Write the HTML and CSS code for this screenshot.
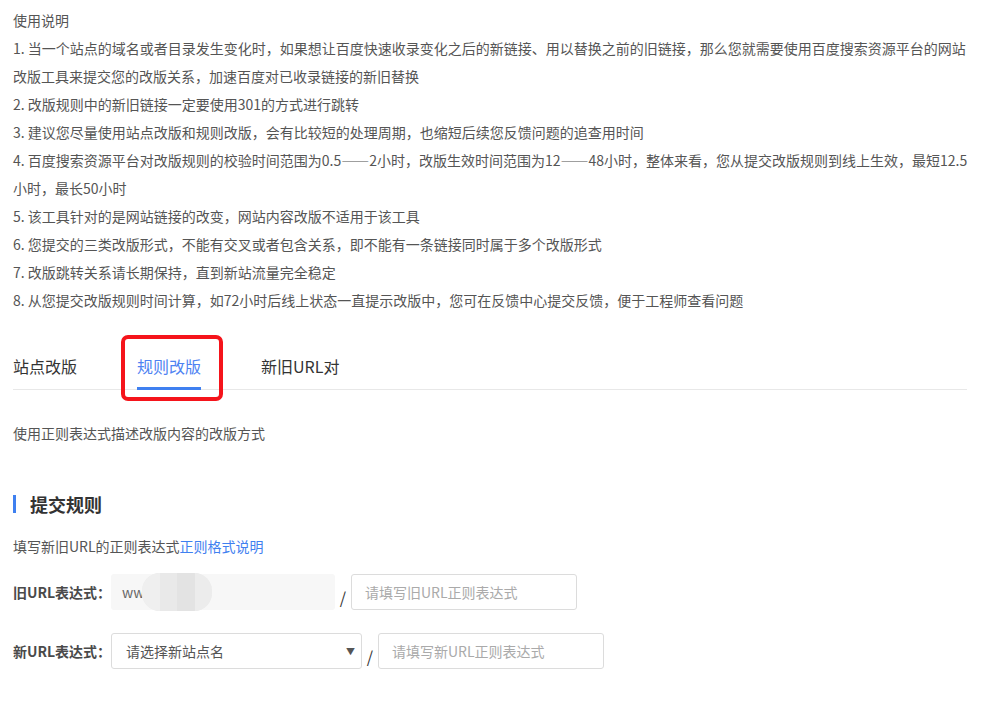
FILE: index.html
```html
<!DOCTYPE html>
<html lang="zh-CN">
<head>
<meta charset="utf-8">
<title>规则改版</title>
<link rel="stylesheet" href="styles.css">
</head>
<body>
<div class="page">
  <div class="notes">
    <p>使用说明</p>
    <p>1. 当一个站点的域名或者目录发生变化时，如果想让百度快速收录变化之后的新链接、用以替换之前的旧链接，那么您就需要使用百度搜索资源平台的网站改版工具来提交您的改版关系，加速百度对已收录链接的新旧替换</p>
    <p>2. 改版规则中的新旧链接一定要使用301的方式进行跳转</p>
    <p>3. 建议您尽量使用站点改版和规则改版，会有比较短的处理周期，也缩短后续您反馈问题的追查用时间</p>
    <p>4. 百度搜索资源平台对改版规则的校验时间范围为0.5——2小时，改版生效时间范围为12——48小时，整体来看，您从提交改版规则到线上生效，最短12.5小时，最长50小时</p>
    <p>5. 该工具针对的是网站链接的改变，网站内容改版不适用于该工具</p>
    <p>6. 您提交的三类改版形式，不能有交叉或者包含关系，即不能有一条链接同时属于多个改版形式</p>
    <p>7. 改版跳转关系请长期保持，直到新站流量完全稳定</p>
    <p>8. 从您提交改版规则时间计算，如72小时后线上状态一直提示改版中，您可在反馈中心提交反馈，便于工程师查看问题</p>
  </div>

  <div class="tabs">
    <div class="tab">站点改版</div>
    <div class="tab active">规则改版</div>
    <div class="tab">新旧URL对</div>
    <div class="mark"></div>
  </div>

  <p class="desc">使用正则表达式描述改版内容的改版方式</p>

  <h2 class="section-title">提交规则</h2>

  <p class="hint">填写新旧URL的正则表达式<a class="link" href="#">正则格式说明</a></p>

  <div class="form-row first">
    <label class="label">旧URL表达式：</label>
    <div class="field disabled">
      <span class="prefix">ww</span>
      <span class="blur"><i></i><i></i><i></i><i></i></span>
    </div>
    <span class="slash">/</span>
    <div class="field input"><span class="placeholder">请填写旧URL正则表达式</span></div>
  </div>

  <div class="form-row">
    <label class="label">新URL表达式：</label>
    <div class="field select">
      <span class="select-text">请选择新站点名</span>
      <span class="arrow">▼</span>
    </div>
    <span class="slash">/</span>
    <div class="field input"><span class="placeholder">请填写新URL正则表达式</span></div>
  </div>
</div>
</body>
</html>
```
FILE: styles.css
```css
* { box-sizing: border-box; }
html, body { margin: 0; padding: 0; background: #fff; }
body {
  font-family: "Noto Sans CJK SC", "Noto Sans", sans-serif;
  color: #555;
  font-size: 14px;
}
.page {
  width: 999px;
  padding: 6px 30px 0 13px;
}
p { margin: 0; }
.notes p {
  line-height: 28px;
  font-size: 14px;
}

.tabs {
  position: relative;
  display: flex;
  gap: 60px;
  margin-top: 17px;
  margin-right: 2px;
  border-bottom: 1px solid #e8e8e8;
}
.tab {
  font-size: 16px;
  line-height: 22px;
  padding: 24px 0 10px;
  color: #333;
  border-bottom: 3px solid transparent;
  margin-bottom: -1px;
}
.tab.active {
  color: #4e82f2;
  border-bottom-color: #3f80f0;
}
.mark {
  position: absolute;
  left: 108px;
  top: 4px;
  width: 102px;
  height: 66px;
  border: 4px solid #f5141b;
  border-radius: 7px;
}

.desc {
  margin-top: 29px;
  line-height: 28px;
  font-size: 14px;
}

.section-title {
  margin: 48px 0 0;
  border-left: 3px solid #3f80f0;
  padding-left: 14px;
  font-size: 18px;
  line-height: 18px;
  font-weight: 700;
  color: #333;
}

.hint {
  margin-top: 19px;
  line-height: 28px;
  font-size: 14px;
}
.link { color: #3f80f0; text-decoration: none; }

.form-row {
  display: flex;
  align-items: center;
  margin-top: 23px;
}
.form-row.first { margin-top: 14px; }
.label {
  width: 98px;
  font-size: 14px;
  font-weight: 700;
  color: #4a4a4a;
  white-space: nowrap;
}
.field {
  height: 36px;
  display: flex;
  align-items: center;
  font-size: 13px;
  border-radius: 3px;
}
.field.disabled {
  width: 224px;
  background: #f7f7f7;
  padding-left: 11px;
  color: #666;
}
.prefix { font-size: 14px; }
.blur {
  display: flex;
  width: 70px;
  height: 38px;
  border-radius: 18px;
  overflow: hidden;
  margin-left: -2px;
  background: #ececec;
}
.blur i { flex: 1; }
.blur i:nth-child(1) { background: #efefef; }
.blur i:nth-child(2) { background: #e9e9e9; }
.blur i:nth-child(3) { background: #e3e3e3; }
.blur i:nth-child(4) { background: #ececec; }
.slash {
  width: 16px;
  text-align: center;
  font-size: 16px;
  color: #333;
  padding-top: 10px;
}
.field.input {
  width: 226px;
  border: 1px solid #dcdcdc;
  padding-left: 13px;
}
.placeholder { color: #aaa; font-size: 14px; }
.field.select {
  width: 251px;
  border: 1px solid #dcdcdc;
  padding: 0 6px 0 14px;
  justify-content: space-between;
  color: #555;
}
.select-text { font-size: 14px; }
.arrow { font-size: 9px; color: #555; }
```
